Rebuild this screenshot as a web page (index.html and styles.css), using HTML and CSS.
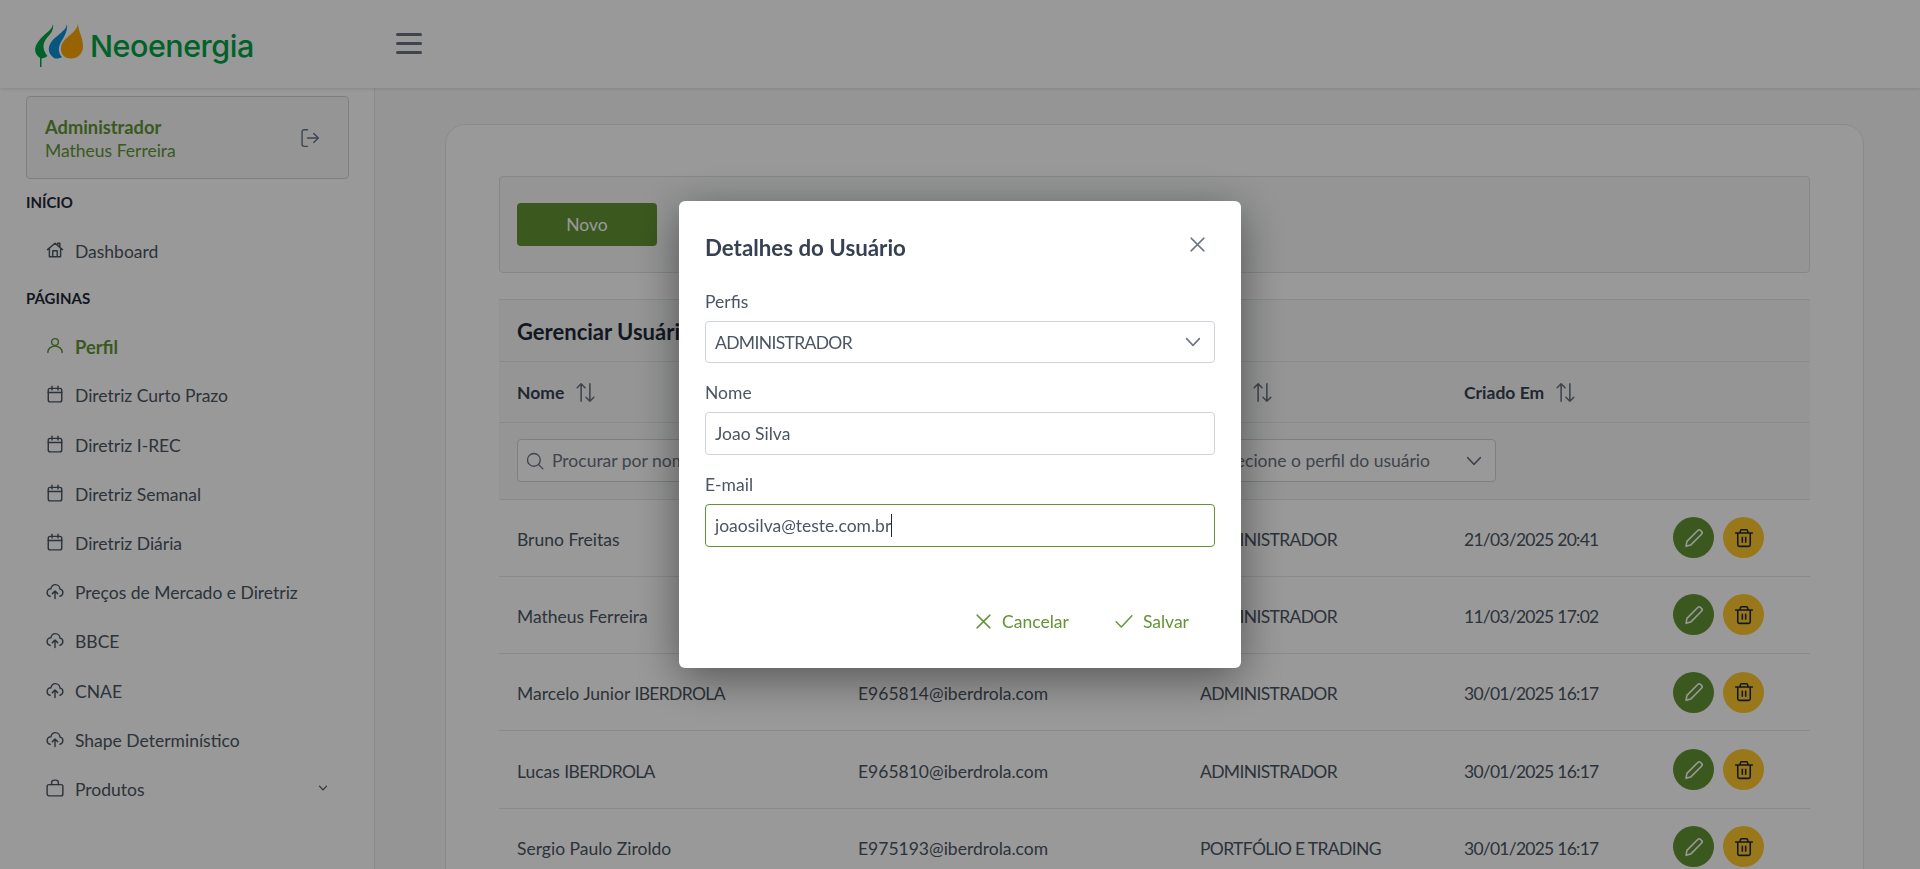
FILE: index.html
```html
<!DOCTYPE html>
<html lang="pt-BR">
<head>
<meta charset="utf-8">
<title>Neoenergia - Usuários</title>
<link rel="stylesheet" href="styles.css">
</head>
<body>
<svg class="defs" width="0" height="0" aria-hidden="true">
  <defs>
    <symbol id="i-home" viewBox="0 0 24 24"><path d="M2 11.500 12 3l10 8.500M4.500 9.500V21h15V9.500M9 21v-8h6v8M15.500 5.500V3h3v5.500"/></symbol>
    <symbol id="i-user" viewBox="0 0 24 24"><circle cx="12" cy="8" r="4.500"/><path d="M2.500 22c0-5 4-8.500 9.500-8.500s9.500 3.500 9.500 8.500"/></symbol>
    <symbol id="i-cal" viewBox="0 0 24 24"><rect x="3" y="4.500" width="18" height="18" rx="2.500"/><path d="M3 10h18M8 1.500v5M16 1.500v5"/></symbol>
    <symbol id="i-cloud" viewBox="0 0 24 24"><path d="M5.500 19C3 18.500 1.500 16.300 1.500 14c0-2.800 2.200-5 5-5 .6-3.200 3-5.500 6-5.500 3.500 0 6 2.700 6.200 6 2.200.3 3.800 2.200 3.800 4.500 0 2.300-1.500 4.300-3.800 5M12 22V12.500M8.500 15.500l3.500-3.500 3.500 3.500"/></symbol>
    <symbol id="i-bag" viewBox="0 0 24 24"><rect x="1.500" y="7.500" width="21" height="15" rx="2.500"/><path d="M7.500 7.500V5c0-2 1.500-3.500 3.500-3.500h2c2 0 3.500 1.500 3.500 3.500v2.500"/></symbol>
    <symbol id="i-chev" viewBox="0 0 24 24"><path d="M3.500 7.500 12 16.500l8.500-9"/></symbol>
    <symbol id="i-sort" viewBox="0 0 24 24"><path d="M7 22V2M2.500 6.500 7 2l4.500 4.500M17 2v20M12.500 17.500 17 22l4.500-4.500"/></symbol>
    <symbol id="i-x" viewBox="0 0 24 24"><path d="M3 3l18 18M21 3 3 21"/></symbol>
    <symbol id="i-pencil" viewBox="0 0 24 24"><path d="M3.500 16 16.500 3c1-1 2.500-1 3.500 0l1 1c1 1 1 2.500 0 3.500L8 20.500l-5.500 1.500z"/></symbol>
    <symbol id="i-trash" viewBox="0 0 24 24"><path d="M2 6h20M4.500 6v14c0 1.200.8 2 2 2h11c1.200 0 2-.8 2-2V6M7.500 6V4c0-1.200.8-2 2-2h5c1.200 0 2 .8 2 2v2M10 11v6M14 11v6"/></symbol>
  </defs>
</svg>

<div class="app">
  <header class="topbar">
    <div class="brand">
      <svg class="leaves" viewBox="35 21 50 46" aria-hidden="true">
        <path class="leaf-green" d="M53 23C52 30 44 32 38 41C33 48 35 54 40 57L40 66L41.500 66L41.500 57.500C43 57.500 46 56.500 47.500 55C43 50 42 44 46 38C49 34 54 31 53 23Z"/>
        <path class="leaf-blue" d="M67 23C66 30 58 33 52 40C47 46 48 53 54 57C56 58 60 57.500 62 56C58 52 58 46 61 41C63 37 68 31 67 23Z"/>
        <path class="leaf-orange" d="M78 22C78 30 68 34 63 41C59 47 61 55 67 57C75 59 83 55 83 45C83 36 78 30 78 22Z"/>
      </svg>
      <span class="brand-name">Neoenergia</span>
    </div>
    <button class="menu-btn" aria-label="Menu"><span></span><span></span><span></span></button>
  </header>

  <div class="body-row">
    <aside class="sidebar">
      <div class="user-card">
        <div class="user-info">
          <strong>Administrador</strong>
          <span>Matheus Ferreira</span>
        </div>
        <svg class="logout" viewBox="0 0 24 24" aria-hidden="true"><path d="M9 2H5C3.500 2 2.500 3 2.500 4.500v15C2.500 21 3.500 22 5 22h4M9 12h13M16.500 6.500 22 12l-5.500 5.500"/></svg>
      </div>
      <div class="nav-label">INÍCIO</div>
      <a class="nav-item"><svg class="nav-icon"><use href="#i-home"/></svg>Dashboard</a>
      <div class="nav-label">PÁGINAS</div>
      <a class="nav-item active"><svg class="nav-icon"><use href="#i-user"/></svg>Perfil</a>
      <a class="nav-item"><svg class="nav-icon"><use href="#i-cal"/></svg>Diretriz Curto Prazo</a>
      <a class="nav-item"><svg class="nav-icon"><use href="#i-cal"/></svg>Diretriz I-REC</a>
      <a class="nav-item"><svg class="nav-icon"><use href="#i-cal"/></svg>Diretriz Semanal</a>
      <a class="nav-item"><svg class="nav-icon"><use href="#i-cal"/></svg>Diretriz Diária</a>
      <a class="nav-item"><svg class="nav-icon"><use href="#i-cloud"/></svg>Preços de Mercado e Diretriz</a>
      <a class="nav-item"><svg class="nav-icon"><use href="#i-cloud"/></svg>BBCE</a>
      <a class="nav-item"><svg class="nav-icon"><use href="#i-cloud"/></svg>CNAE</a>
      <a class="nav-item"><svg class="nav-icon"><use href="#i-cloud"/></svg>Shape Determinístico</a>
      <a class="nav-item"><svg class="nav-icon"><use href="#i-bag"/></svg>Produtos<svg class="nav-chev"><use href="#i-chev"/></svg></a>
    </aside>

    <main class="main">
      <section class="card">
        <div class="toolbar"><button class="btn-new">Novo</button></div>
        <div class="caption">Gerenciar Usuários</div>
        <table class="grid">
          <colgroup><col class="c1"><col class="c2"><col class="c3"><col class="c4"><col class="c5"></colgroup>
          <thead>
            <tr class="head">
              <th><span class="th">Nome<svg class="sort"><use href="#i-sort"/></svg></span></th>
              <th><span class="th">E-mail<svg class="sort"><use href="#i-sort"/></svg></span></th>
              <th><span class="th">Perfil<svg class="sort"><use href="#i-sort"/></svg></span></th>
              <th><span class="th">Criado Em<svg class="sort"><use href="#i-sort"/></svg></span></th>
              <th></th>
            </tr>
            <tr class="filters">
              <th><div class="filter search"><svg class="search-ico" viewBox="0 0 24 24"><circle cx="10.500" cy="10.500" r="8.500"/><path d="M17 17l5.500 5.500"/></svg><span class="ph">Procurar por nome</span></div></th>
              <th><div class="filter search"><svg class="search-ico" viewBox="0 0 24 24"><circle cx="10.500" cy="10.500" r="8.500"/><path d="M17 17l5.500 5.500"/></svg><span class="ph">Procurar por e-mail</span></div></th>
              <th><div class="filter select"><span class="ph">Selecione o perfil do usuário</span><svg class="sel-chev"><use href="#i-chev"/></svg></div></th>
              <th></th>
              <th></th>
            </tr>
          </thead>
          <tbody>
            <tr><td>Bruno Freitas</td><td></td><td class="tight">ADMINISTRADOR</td><td class="date">21/03/2025 20:41</td><td><div class="actions"><button class="round edit"><svg><use href="#i-pencil"/></svg></button><button class="round del"><svg><use href="#i-trash"/></svg></button></div></td></tr>
            <tr><td>Matheus Ferreira</td><td></td><td class="tight">ADMINISTRADOR</td><td class="date">11/03/2025 17:02</td><td><div class="actions"><button class="round edit"><svg><use href="#i-pencil"/></svg></button><button class="round del"><svg><use href="#i-trash"/></svg></button></div></td></tr>
            <tr><td>Marcelo Junior <span class="tight">IBERDROLA</span></td><td>E965814@iberdrola.com</td><td class="tight">ADMINISTRADOR</td><td class="date">30/01/2025 16:17</td><td><div class="actions"><button class="round edit"><svg><use href="#i-pencil"/></svg></button><button class="round del"><svg><use href="#i-trash"/></svg></button></div></td></tr>
            <tr><td>Lucas <span class="tight">IBERDROLA</span></td><td>E965810@iberdrola.com</td><td class="tight">ADMINISTRADOR</td><td class="date">30/01/2025 16:17</td><td><div class="actions"><button class="round edit"><svg><use href="#i-pencil"/></svg></button><button class="round del"><svg><use href="#i-trash"/></svg></button></div></td></tr>
            <tr><td>Sergio Paulo Ziroldo</td><td>E975193@iberdrola.com</td><td class="tight">PORTFÓLIO E TRADING</td><td class="date">30/01/2025 16:17</td><td><div class="actions"><button class="round edit"><svg><use href="#i-pencil"/></svg></button><button class="round del"><svg><use href="#i-trash"/></svg></button></div></td></tr>
          </tbody>
        </table>
      </section>
    </main>
  </div>
</div>

<div class="mask"></div>
<div class="dialog" role="dialog" aria-label="Detalhes do Usuário">
  <div class="dlg-head">
    <h2>Detalhes do Usuário</h2>
    <svg class="dlg-close"><use href="#i-x"/></svg>
  </div>
  <div class="field">
    <label>Perfis</label>
    <div class="input dd"><span class="tight">ADMINISTRADOR</span><svg class="sel-chev"><use href="#i-chev"/></svg></div>
  </div>
  <div class="field">
    <label>Nome</label>
    <div class="input">Joao Silva</div>
  </div>
  <div class="field">
    <label>E-mail</label>
    <div class="input focus"><span>joaosilva@teste.com.br</span><i class="caret"></i></div>
  </div>
  <div class="dlg-foot">
    <button class="txt-btn"><svg class="btn-x"><use href="#i-x"/></svg>Cancelar</button>
    <button class="txt-btn save"><svg class="btn-check" viewBox="0 0 24 24"><path d="M1.500 13l7 7L22.500 5"/></svg>Salvar</button>
  </div>
</div>
</body>
</html>
```
FILE: styles.css
```css
* { box-sizing: border-box; }
html, body { margin: 0; height: 100%; overflow: hidden; }
body { font-family: "Lato", "Noto Sans", sans-serif; font-size: 17.500px; color: #4b5563; background: #fff; }
.defs { position: absolute; }
svg { fill: none; stroke: currentColor; stroke-width: 2; stroke-linecap: round; stroke-linejoin: round; display: block; }
button { font: inherit; border: 0; background: none; padding: 0; }
.tight { letter-spacing: -.65px; }
.date { letter-spacing: -.75px; }

.app { display: flex; flex-direction: column; height: 869px; }
.topbar { height: 88px; flex: none; display: flex; align-items: center; background: #fff; box-shadow: 0 1px 3px rgba(0,0,0,.12); position: relative; z-index: 2; }
.brand { width: 396px; padding-left: 35px; display: flex; align-items: center; gap: 5px; }
.leaves { width: 50px; height: 46px; stroke: none; margin-top: 2px; }
.leaf-green { fill: #00a443; }
.leaf-blue { fill: #0a8fd6; }
.leaf-orange { fill: #fba707; }
.brand-name { font-family: "Inter", sans-serif; font-size: 30.500px; font-weight: 500; color: #00a443; letter-spacing: -.5px; margin-top: 2px; }
.menu-btn { width: 26px; display: flex; flex-direction: column; gap: 6px; margin-top: -2px; }
.menu-btn span { height: 3px; border-radius: 2px; background: #6b7280; }

.body-row { flex: 1; display: flex; min-height: 0; }
.sidebar { width: 375px; flex: none; background: #fff; border-right: 1px solid #e5e7eb; padding: 8px 25px 0 26px; }
.user-card { height: 83px; border: 1px solid #d1d5db; border-radius: 4px; background: #f8f9fa; padding: 0 28px 0 18px; display: flex; align-items: center; justify-content: space-between; margin-bottom: 14px; }
.user-info { display: flex; flex-direction: column; line-height: 23px; color: #639434; padding-top: 2px; }
.user-info strong { font-weight: 700; font-size: 18.300px; }
.logout { width: 20px; height: 20px; color: #64748b; stroke-width: 1.700; }
.nav-label { font-size: 15px; font-weight: 700; color: #1f2937; line-height: 18px; margin-bottom: 16px; }
.nav-item { height: 49.200px; display: flex; align-items: center; gap: 11px; padding-left: 20px; padding-right: 21px; }
.nav-item + .nav-label { margin-top: 13px; margin-bottom: 15px; }
.nav-icon { width: 18px; height: 18px; flex: none; stroke-width: 1.900; margin-top: -3px; }
.nav-item.active { color: #639434; font-weight: 700; font-size: 18.300px; }
.nav-chev { width: 10px; height: 10px; margin-left: auto; margin-top: -3px; stroke-width: 3; }

.main { flex: 1; min-width: 0; background: #f8f9fa; padding: 36px 56px 0 70px; overflow: hidden; }
.card { background: #fff; border: 1px solid #e5e7eb; border-radius: 20px; padding: 51px 53px 0; min-height: 900px; }
.toolbar { height: 97px; border: 1px solid #dee2e6; border-radius: 4px; background: #f8f9fa; display: flex; align-items: center; padding-left: 17px; margin-bottom: 26px; }
.btn-new { width: 140px; height: 43px; border-radius: 4px; background: #639434; color: #fff; }
.caption { height: 63px; background: #f8f9fa; border-top: 1px solid #e5e7eb; border-bottom: 1px solid #e5e7eb; padding: 2px 0 0 18px; display: flex; align-items: center; font-size: 22px; font-weight: 700; color: #1f2937; }
.grid { width: 100%; border-collapse: collapse; table-layout: fixed; }
.c1 { width: 341px; } .c2 { width: 342px; } .c3 { width: 264px; } .c4 { width: 209px; }
th, td { padding: 0 18px; text-align: left; }
.head { background: #f8f9fa; border-bottom: 1px solid #e5e7eb; }
.head th { height: 60px; padding-top: 2px; font-weight: 700; color: #374151; }
.th { display: inline-flex; align-items: center; gap: 11px; }
.sort { width: 21px; height: 21px; stroke-width: 1.800; color: #6b7280; }
.filters { background: #f8f9fa; border-bottom: 1px solid #e5e7eb; }
.filters th { height: 77px; font-weight: 400; }
.filter { height: 43px; border: 1px solid #d1d5db; border-radius: 4px; background: #fff; display: flex; align-items: center; padding: 0 12px; white-space: nowrap; overflow: hidden; }
.search { gap: 8px; padding-left: 8px; }
.select { width: 296px; justify-content: space-between; }
.ph { color: #6b7280; }
.search-ico { width: 18px; height: 18px; color: #6b7280; flex: none; stroke-width: 1.800; }
.sel-chev { width: 18px; height: 18px; color: #6b7280; flex: none; stroke-width: 2; }
tbody td { height: 77.300px; padding-top: 3px; border-bottom: 1px solid #e5e7eb; white-space: nowrap; overflow: hidden; }
.actions { display: flex; gap: 9px; margin-top: -3px; }
.round { width: 41px; height: 41px; border-radius: 50%; display: flex; align-items: center; justify-content: center; }
.round svg { width: 20px; height: 20px; stroke-width: 1.900; }
.edit { background: #639434; color: #fff; }
.del { background: #ffc92f; color: #1f2937; }

.mask { position: fixed; inset: 0; background: rgba(0,0,0,.4); z-index: 10; }
.dialog { position: fixed; z-index: 11; left: 679px; top: 201px; width: 562px; height: 467px; background: #fff; border-radius: 6px; box-shadow: 0 10px 45px rgba(0,0,0,.45); padding: 0 26px; display: flex; flex-direction: column; }
.dlg-head { height: 90px; display: flex; align-items: center; justify-content: space-between; }
.dlg-head h2 { margin: 2px 0 0; font-size: 22.300px; font-weight: 700; color: #374151; }
.dlg-close { width: 17px; height: 17px; color: #6b7280; margin-right: 9px; stroke-width: 2; margin-top: -3px; }
.field { display: flex; flex-direction: column; margin-bottom: 19px; }
.field label { line-height: 22px; margin-bottom: 8px; }
.input { height: 43px; border: 1px solid #ced4da; border-radius: 4px; padding: 0 9px; display: flex; align-items: center; background: #fff; }
.dd { justify-content: space-between; padding-right: 12px; height: 42px; }
.focus { border-color: #639434; }
.caret { width: 1px; height: 23px; background: #1f2937; }
.dlg-foot { margin-top: auto; height: 59px; display: flex; justify-content: flex-end; gap: 46px; padding-right: 26px; }
.txt-btn { display: flex; align-items: center; gap: 10px; color: #639434; height: 24px; }
.save { gap: 10px; }
.btn-x { width: 17px; height: 17px; stroke-width: 2; }
.btn-check { width: 18px; height: 18px; stroke-width: 1.900; }
```
